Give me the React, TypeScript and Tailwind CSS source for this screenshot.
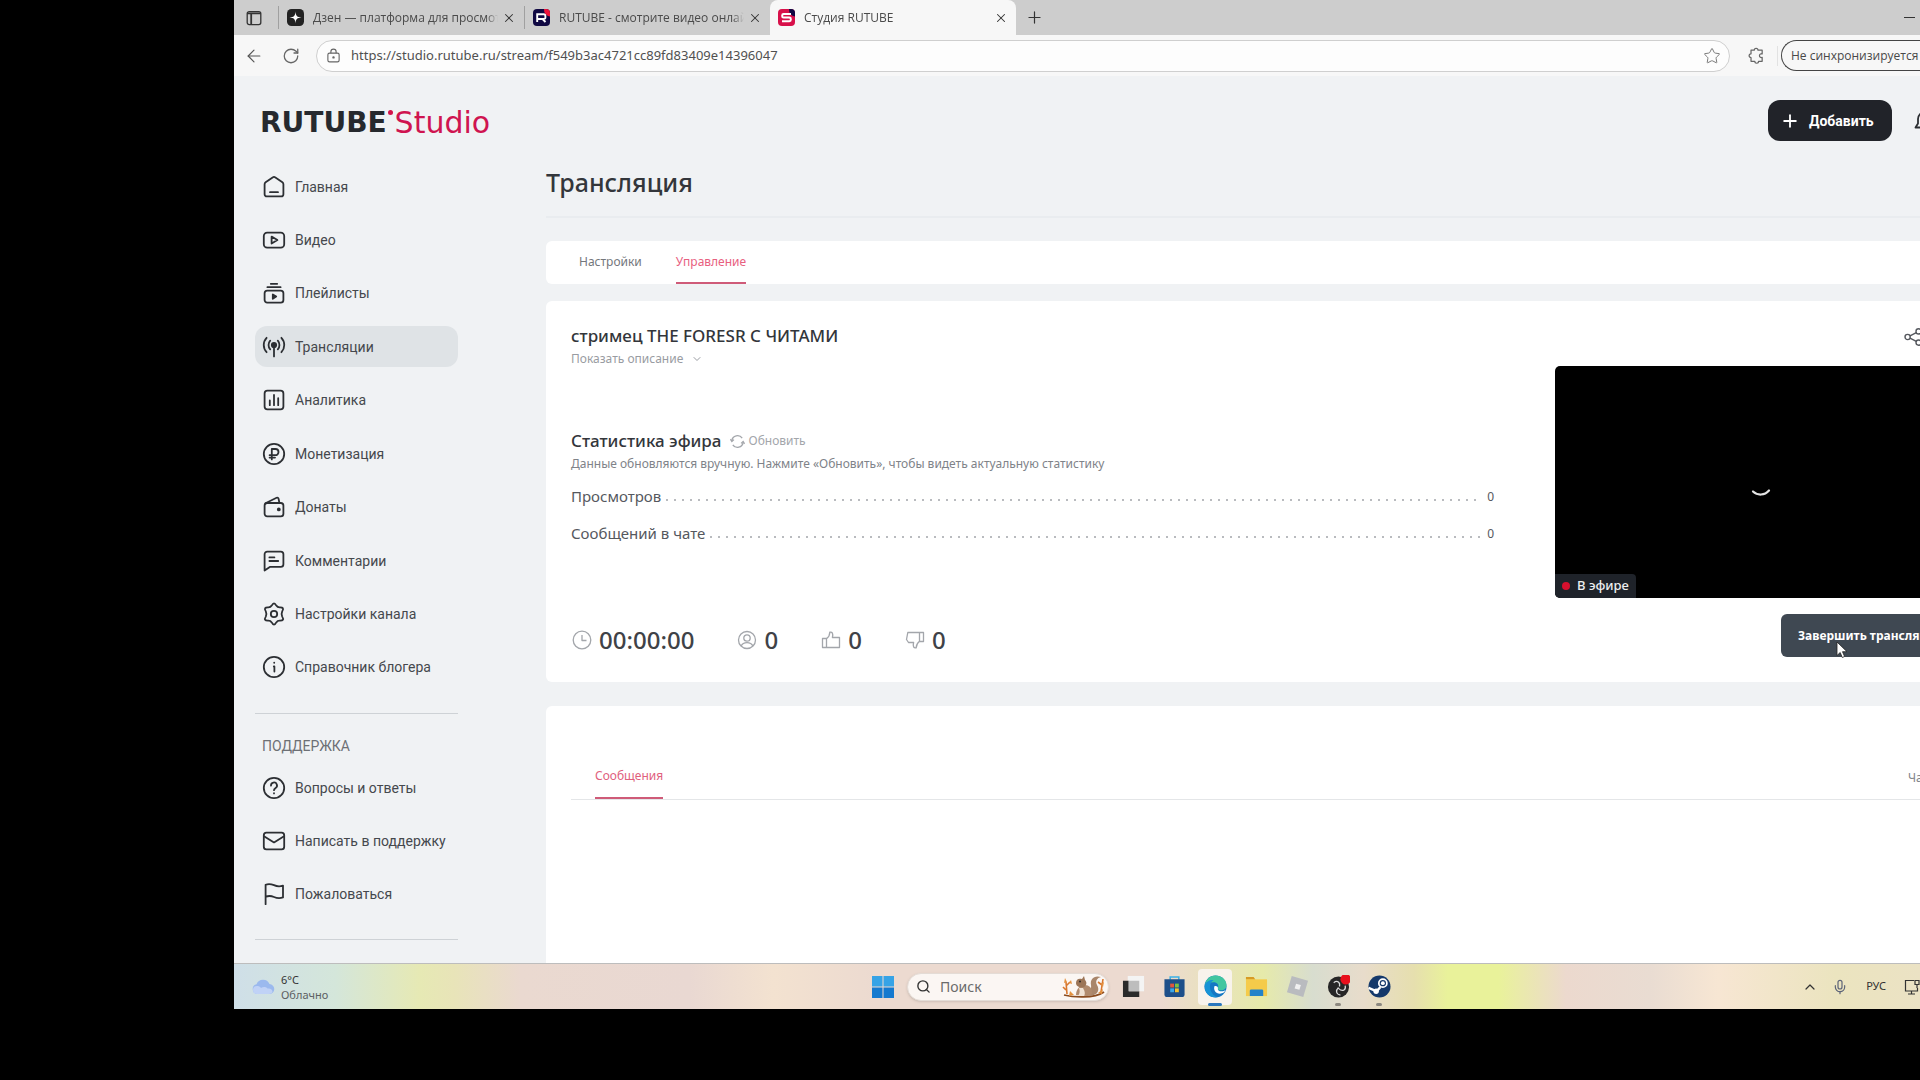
import type { ReactNode } from "react"
import { ArrowLeft, ChevronDown, ChevronUp, Mic, Plus, RotateCw, Search, Star, X } from "lucide-react"

type NavItem = {
  label: string
  icon: ReactNode
  active?: boolean
}

function Glyph({ children }: { children: ReactNode }) {
  return (
    <svg
      viewBox="0 0 24 24"
      className="size-6 shrink-0"
      fill="none"
      stroke="currentColor"
      strokeWidth="1.8"
      strokeLinecap="round"
      strokeLinejoin="round"
      aria-hidden="true"
    >
      {children}
    </svg>
  )
}

const mainNav: NavItem[] = [
  {
    label: "Главная",
    icon: (
      <Glyph>
        <path d="M2.6 9.2c0-.8.4-1.5 1-2l7-4.8c.9-.6 1.9-.6 2.8 0l7 4.8c.6.5 1 1.2 1 2v10a2.2 2.2 0 0 1-2.2 2.2H4.8a2.2 2.2 0 0 1-2.2-2.2zM8 17.2h8" />
      </Glyph>
    ),
  },
  {
    label: "Видео",
    icon: (
      <Glyph>
        <rect x="1.8" y="4.6" width="20.4" height="15" rx="3.4" />
        <path d="M9.6 8.6v7l5.8-3.5z" />
      </Glyph>
    ),
  },
  {
    label: "Плейлисты",
    icon: (
      <Glyph>
        <rect x="2.6" y="9.6" width="18.8" height="12" rx="2.6" />
        <path d="M5.4 6.2h13.2M8.8 2.8h6.4" />
        <path d="M10.8 13.4v4.4l3.4-2.2z" fill="currentColor" />
      </Glyph>
    ),
  },
  {
    label: "Трансляции",
    active: true,
    icon: (
      <Glyph>
        <circle cx="12" cy="10" r="2.2" fill="currentColor" />
        <path d="M12 10v11.4M8.2 14.4c-2.2-2.4-2.2-6.4 0-8.8M15.8 14.4c2.2-2.4 2.2-6.4 0-8.8M4.6 17.2c-3.8-4-3.8-10.4 0-14.4M19.4 17.2c3.8-4 3.8-10.4 0-14.4" />
      </Glyph>
    ),
  },
  {
    label: "Аналитика",
    icon: (
      <Glyph>
        <rect x="2.6" y="2.6" width="18.8" height="18.8" rx="2.8" />
        <path d="M7.8 12.4v4.8M12 7v10.2M16.2 10.2v7" />
      </Glyph>
    ),
  },
  {
    label: "Монетизация",
    icon: (
      <Glyph>
        <circle cx="12" cy="12" r="10.2" />
        <path d="M9.8 17.4V7h3.6a3 3 0 0 1 0 6.2H7.6M7.6 15.6h5.4" />
      </Glyph>
    ),
  },
  {
    label: "Донаты",
    icon: (
      <Glyph>
        <rect x="2.6" y="8" width="18.8" height="13.4" rx="2.6" />
        <path d="M3.4 8.2l11.2-5.4a1.4 1.4 0 0 1 2 1L17.4 8" />
        <circle cx="16.8" cy="14.4" r="1" fill="currentColor" />
      </Glyph>
    ),
  },
  {
    label: "Комментарии",
    icon: (
      <Glyph>
        <path d="M2.6 21.6V5.2a2.6 2.6 0 0 1 2.6-2.6h13.6a2.6 2.6 0 0 1 2.6 2.6v10a2.6 2.6 0 0 1-2.6 2.6H8.2zM7.4 8.4h5M7.4 12h8.8" />
      </Glyph>
    ),
  },
  {
    label: "Настройки канала",
    icon: (
      <Glyph>
        <path d="M9.7 3.6Q12-.8 14.3 3.6 15.5 5.5 17.8 5.4 22.8 5.2 20.2 9.4 19 12 20.2 14.6 22.8 18.8 17.8 18.6 15.5 18.5 14.3 20.4 12 24.8 9.7 20.4 8.5 18.5 6.2 18.6 1.2 18.8 3.8 14.6 5 12 3.8 9.4 1.2 5.2 6.2 5.4 8.5 5.5 9.7 3.6z" />
        <circle cx="12" cy="12" r="3.2" />
      </Glyph>
    ),
  },
  {
    label: "Справочник блогера",
    icon: (
      <Glyph>
        <circle cx="12" cy="12" r="10.2" />
        <path d="M11.8 11.4h.6v5.2M12.2 7.6v.2" />
      </Glyph>
    ),
  },
]

const supportNav: NavItem[] = [
  {
    label: "Вопросы и ответы",
    icon: (
      <Glyph>
        <circle cx="12" cy="12" r="10.2" />
        <path d="M9 9.6a3 3 0 1 1 4.6 2.4c-1 .7-1.6 1-1.6 2.2M12 17.2v.2" />
      </Glyph>
    ),
  },
  {
    label: "Написать в поддержку",
    icon: (
      <Glyph>
        <rect x="1.8" y="3.6" width="20.4" height="16.8" rx="2.6" />
        <path d="M2.4 7.4 12 13.4l9.6-6" />
      </Glyph>
    ),
  },
  {
    label: "Пожаловаться",
    icon: (
      <Glyph>
        <path d="M3.6 22.2V2.8c3-1.4 5.6-.8 8.4.4s5.6 1.6 9 .4v11.8c-3.4 1.2-6.2.8-9-.4s-5.4-1.4-8.4-.2" />
      </Glyph>
    ),
  },
]

function NavList({ items, className = "gap-3" }: { items: NavItem[]; className?: string }) {
  return (
    <ul className={`flex flex-col ${className}`}>
      {items.map((item) => (
        <li key={item.label}>
          <a
            href="#"
            className={`flex h-[41px] items-center gap-[9px] rounded-xl pl-[7px] font-[Roboto,sans-serif] text-sm whitespace-nowrap text-[#45484d] ${
              item.active ? "bg-[#dfe3e6]" : ""
            }`}
          >
            <span className="text-[#2c2f33]">{item.icon}</span>
            {item.label}
          </a>
        </li>
      ))}
    </ul>
  )
}

function BrowserTab({ title, icon, active }: { title: string; icon: ReactNode; active?: boolean }) {
  return (
    <div
      className={`flex h-[35px] w-[246px] items-center pr-2 pl-2 ${
        active ? "rounded-t-lg bg-[#f7f7f7]" : "border-l border-[#a9a9a9] [border-image:linear-gradient(to_bottom,transparent_20%,#a0a0a0_20%,#a0a0a0_80%,transparent_80%)_1]"
      }`}
    >
      {icon}
      <span className="ml-[9px] flex-1 overflow-hidden text-xs whitespace-nowrap text-[#4a4a4a] [mask-image:linear-gradient(to_right,black_94%,transparent)]">
        {title}
      </span>
      <button aria-label={`Закрыть ${title}`} className="ml-1 text-[#333]">
        <X className="size-[14px]" strokeWidth={1.8} />
      </button>
    </div>
  )
}

function BrowserChrome() {
  return (
    <header className="font-['Open_Sans',sans-serif]">
      <div className="flex h-[35px] items-center bg-[#cdcdcd]">
        <button aria-label="Меню вкладок" className="mr-4 ml-[12px] text-[#333]">
          <svg viewBox="0 0 16 16" className="size-4" fill="none" stroke="currentColor" strokeWidth="1.3">
            <rect x="1.2" y="1.6" width="13.6" height="13" rx="2" />
            <path d="M1.2 3.4h13.6M5.2 4v10.5" strokeWidth="1.8" />
          </svg>
        </button>
        <BrowserTab
          title="Дзен — платформа для просмот"
          icon={
            <svg viewBox="0 0 17 17" className="size-[17px] shrink-0">
              <rect width="17" height="17" rx="4.5" fill="#222" />
              <path d="M8.5 2.5c.3 4.5 1.5 5.7 6 6-4.5.3-5.7 1.5-6 6-.3-4.5-1.5-5.7-6-6 4.5-.3 5.7-1.5 6-6z" fill="#fff" />
            </svg>
          }
        />
        <BrowserTab
          title="RUTUBE - смотрите видео онлай"
          icon={
            <svg viewBox="0 0 17 17" className="size-[17px] shrink-0">
              <rect width="17" height="17" rx="4" fill="#100943" />
              <path d="M11 0h2a4 4 0 0 1 4 4v3.5A7 7 0 0 1 11 0z" fill="#ed143b" />
              <path d="M4.2 13V5.3h6.6a1.6 1.6 0 0 1 1.6 1.6v1.5A1.6 1.6 0 0 1 10.8 10H4.2M9.5 10l3 3" fill="none" stroke="#fff" strokeWidth="1.9" />
            </svg>
          }
        />
        <BrowserTab
          active
          title="Студия RUTUBE"
          icon={
            <svg viewBox="0 0 17 17" className="size-[17px] shrink-0">
              <rect width="17" height="17" rx="4" fill="#d8104a" />
              <path d="M11 0h2a4 4 0 0 1 4 4v3.5A7 7 0 0 1 11 0z" fill="#100943" />
              <path d="M13 5H5.6a1.4 1.4 0 0 0-1.4 1.4v.8a1.4 1.4 0 0 0 1.4 1.4h5.8a1.4 1.4 0 0 1 1.4 1.4v.8a1.4 1.4 0 0 1-1.4 1.4H4" fill="none" stroke="#fff" strokeWidth="2" />
            </svg>
          }
        />
        <button aria-label="Новая вкладка" className="ml-[9px] text-[#333]">
          <Plus className="size-[19px]" strokeWidth={1.5} />
        </button>
        <button aria-label="Свернуть" className="ml-auto flex w-4 items-center">
          <span className="h-px w-[11px] bg-[#333]" />
        </button>
      </div>

      <div className="flex h-[41px] items-center bg-[#f7f7f7]">
        <button aria-label="Назад" className="ml-[10px] text-[#555]">
          <ArrowLeft className="size-5" strokeWidth={1.4} />
        </button>
        <button aria-label="Обновить страницу" className="ml-[18px] text-[#666]">
          <RotateCw className="size-[18px]" strokeWidth={1.7} />
        </button>
        <div className="ml-4 flex h-8 flex-1 items-center rounded-full border border-[#cfcfcf] bg-[#fdfdfd] pr-2 pl-[9px]">
          <svg viewBox="0 0 16 16" className="size-[15px] shrink-0" fill="none" stroke="#666" strokeWidth="1.2">
            <rect x="2" y="5.5" width="12" height="9.3" rx="1.8" />
            <path d="M5.2 5.5V4a2.8 2.8 0 0 1 5.6 0v1.5" />
            <circle cx="8" cy="10" r=".7" fill="#666" />
          </svg>
          <input
            aria-label="Адресная строка"
            defaultValue="https://studio.rutube.ru/stream/f549b3ac4721cc89fd83409e14396047"
            className="ml-[10px] min-w-0 flex-1 bg-transparent font-['Noto_Sans',sans-serif] text-[13px] text-[#505050] outline-none"
          />
          <button aria-label="В избранное" className="text-[#777]">
            <Star className="size-[18px]" strokeWidth={1.3} />
          </button>
        </div>
        <button aria-label="Расширения" className="ml-[18px] text-[#666]">
          <svg viewBox="0 0 18 18" className="size-[17px]" fill="none" stroke="currentColor" strokeWidth="1.3" strokeLinejoin="round">
            <path d="M6.6 3.4a2 2 0 0 1 4 0H15v4a2 2 0 1 0 0 3.6v4.2h-3.8a2 2 0 0 1-4 0H3.2v-4a2 2 0 0 1 0-4V3.4z" />
          </svg>
        </button>
        <span className="mr-[3px] ml-3 h-5 w-px bg-[#e2e2e2]" />
        <button className="flex h-[31px] w-[139px] items-center rounded-l-full border border-r-0 border-[#444] pl-[9px] text-xs whitespace-nowrap text-[#484848]">
          Не синхронизируется
        </button>
      </div>
    </header>
  )
}

function Sidebar() {
  return (
    <aside className="w-[312px] shrink-0 pl-[21px]">
      <div className="w-[203px]">
        <div className="flex h-[90px] items-center pt-[3px] pl-[5px] font-['DejaVu_Sans',sans-serif] leading-none whitespace-nowrap">
          <span className="text-[28px] font-bold text-[#26292e]">RUTUBE</span>
          <span className="mb-5 ml-px size-[5px] shrink-0 rounded-full bg-[#d3124a]" />
          <span className="ml-[2px] text-[30px] text-[#cf1450]">Studio</span>
        </div>
        <nav>
          <NavList items={mainNav} className="h-[522px] justify-between" />
          <hr className="mt-[25px] border-[#ced2d6]" />
          <h2 className="mt-[22px] mb-[11px] pl-[7px] font-[Roboto,sans-serif] text-sm leading-5 text-[#6d7075]">ПОДДЕРЖКА</h2>
          <NavList items={supportNav} />
          <hr className="mt-[25px] border-[#ced2d6]" />
        </nav>
      </div>
    </aside>
  )
}

function StatRow({ label, value }: { label: string; value: number }) {
  return (
    <div className="flex h-[37px] items-center text-[15px] leading-5 text-[#55585e]">
      <dt>{label}</dt>
      <span className="mt-2 mr-1 ml-[2px] h-[2px] flex-1 bg-[radial-gradient(circle,#b9bbbf_1px,transparent_1px)] bg-[length:8px_2px]" />
      <dd className="pt-[3px] pl-[2px] text-xs">{value}</dd>
    </div>
  )
}

function Counter({ icon, value }: { icon: ReactNode; value: string }) {
  return (
    <div className="flex items-center gap-[7px]">
      <svg viewBox="0 0 20 20" className="size-5" fill="none" stroke="#a3a6ab" strokeWidth="1.3" strokeLinejoin="round">
        {icon}
      </svg>
      <span className="text-2xl leading-8 font-medium text-[#3f4247]">{value}</span>
    </div>
  )
}

function StreamCard() {
  return (
    <section className="mt-[17px] flex h-[381px] rounded-l-md bg-white pl-[25px]">
      <div className="flex min-w-0 flex-1 flex-col">
        <h2 className="mt-[23px] text-[17px] leading-6 font-medium text-[#33363b]">стримец THE FORESR С ЧИТАМИ</h2>
        <button className="mt-px flex items-center gap-2 self-start text-xs leading-5 text-[#999ca2]">
          Показать описание
          <ChevronDown className="size-3" strokeWidth={2} />
        </button>

        <div className="mt-[60px] flex items-center">
          <h2 className="text-[17px] leading-6 font-medium text-[#33363b]">Статистика эфира</h2>
          <button className="ml-2 flex items-center gap-1 text-xs leading-5 text-[#a3a6ab]">
            <svg viewBox="0 0 16 16" className="size-[15px]" fill="none" stroke="#a3a6ab" strokeWidth="1.4">
              <path d="M2 7a6 6 0 0 1 11-2.5M14 9a6 6 0 0 1-11 2.5" />
              <path d="M.5 5.5 2 8l2.2-2M15.5 10.5 14 8l-2.2 2" />
            </svg>
            Обновить
          </button>
        </div>
        <p className="mt-px text-xs leading-5 text-[#808389]">
          Данные обновляются вручную. Нажмите «Обновить», чтобы видеть актуальную статистику
        </p>
        <dl className="mt-[3px]">
          <StatRow label="Просмотров" value={0} />
          <StatRow label="Сообщений в чате" value={0} />
        </dl>

        <div className="mt-auto mb-[26px] flex gap-[43px] pl-px">
          <Counter
            value="00:00:00"
            icon={
              <>
                <circle cx="10" cy="10" r="8.8" />
                <path d="M10 5v5.5h4.5" />
              </>
            }
          />
          <Counter
            value="0"
            icon={
              <>
                <circle cx="10" cy="10" r="8.5" />
                <circle cx="10" cy="8" r="3.2" />
                <path d="M4.2 16c1-2.3 3-3.3 5.8-3.3s4.8 1 5.8 3.3" />
              </>
            }
          />
          <Counter
            value="0"
            icon={<path d="M1.5 8.5h4v9h-4zM5.5 8.8C7.8 7 8.8 5 8.8 2.2c2.4-.6 3.6 1.4 2.6 5.3h7.1v10h-13" />}
          />
          <Counter
            value="0"
            icon={<path d="M18.5 11.5h-4v-9h4zM14.5 11.2c-2.3 1.8-3.3 3.8-3.3 6.6-2.4.6-3.6-1.4-2.6-5.3H3.5l-2-3 1.3-7h11.7" />}
          />
        </div>
      </div>

      <div className="ml-[61px] w-[365px] shrink-0 overflow-hidden">
        <div className="mt-[26px] flex justify-end">
          <button aria-label="Поделиться" className="-mr-1">
            <svg viewBox="0 0 20 20" className="size-5" fill="none" stroke="#55585e" strokeWidth="1.4">
              <circle cx="3.6" cy="10" r="2.6" />
              <circle cx="14.6" cy="4.4" r="2.6" />
              <circle cx="14.6" cy="15.6" r="2.6" />
              <path d="m6 8.8 6.3-3.2M6 11.2l6.3 3.2" />
            </svg>
          </button>
        </div>
        <div className="relative mt-[19px] flex h-[232px] w-[412px] items-center justify-center rounded-[5px] bg-black">
          <svg viewBox="0 0 20 20" className="mt-[14px] size-5" fill="none" stroke="#e4e4e4" strokeWidth="2.2" strokeLinecap="round">
            <path d="M2 12.5c4.5 4.2 11.5 4.2 16-1" />
          </svg>
          <div className="absolute bottom-0 left-0 flex h-6 items-center gap-[7px] rounded-tr rounded-bl-[5px] bg-[#1f232a] px-[7px] text-[13px] font-medium whitespace-nowrap text-[#eceef0]">
            <span className="size-2 rounded-full bg-[#d6102e]" />
            В эфире
          </div>
        </div>
        <div className="relative mt-4 ml-[226px]">
          <button className="flex h-[43px] w-[180px] items-center rounded-md bg-[#3f4852] pl-[17px] text-xs font-bold whitespace-nowrap text-white">
            Завершить трансляцию
          </button>
          <svg viewBox="0 0 12 18" className="absolute top-[27px] left-[55px] h-[18px] w-3" aria-hidden="true">
            <path d="M1 1v13.5l3.2-3 2.1 5 2.3-1-2.1-4.8H11z" fill="#fff" stroke="#222" strokeWidth=".8" />
          </svg>
        </div>
      </div>
    </section>
  )
}

function Main() {
  return (
    <main className="flex min-w-0 flex-1 flex-col">
      <div className="flex justify-end pt-6">
        <button className="flex h-[41px] w-[124px] items-center gap-[9px] rounded-xl bg-[#212329] pl-3 font-[Roboto,sans-serif] text-sm font-bold text-white">
          <Plus className="size-5" strokeWidth={2.2} />
          Добавить
        </button>
        <button aria-label="Уведомления" className="ml-[22px] w-[6px] overflow-hidden">
          <svg viewBox="0 0 22 22" className="size-[22px]" fill="none" stroke="#2c2f33" strokeWidth="1.8" strokeLinejoin="round">
            <path d="M1.5 17.5 4 13.5V9a7 7 0 0 1 14 0v4.5l2.5 4z" />
          </svg>
        </button>
      </div>
      <h1 className="mt-[25px] text-[25px] leading-8 font-medium text-[#33363b]">Трансляция</h1>
      <hr className="mt-[18px] border-t-2 border-[#e9ecef]" />
      <div className="mt-[23px] flex h-[43px] gap-[34px] rounded-l-md bg-white pl-[33px] text-xs leading-[41px]" role="tablist">
        <button role="tab" aria-selected="false" className="border-b-2 border-transparent text-[#74777c]">
          Настройки
        </button>
        <button role="tab" aria-selected="true" className="border-b-2 border-[#cf5b78] text-[#e8607f]">
          Управление
        </button>
      </div>
      <StreamCard />
      <section className="mt-6 flex-1 rounded-tl-md bg-white pl-[25px]">
        <div className="flex items-end justify-between border-b border-[#e4e6e8] pt-[49px] pl-6 text-xs leading-[42px]">
          <button role="tab" aria-selected="true" className="border-b-2 border-[#cf5b78] text-[#e0607d]">
            Сообщения
          </button>
          <button className="w-3 overflow-hidden text-[#808389]">Чат</button>
        </div>
      </section>
    </main>
  )
}

function Squirrel() {
  return (
    <svg viewBox="0 0 44 26" className="h-[26px] w-11">
      <path d="M2 21c8 2 30 4 40-3" fill="none" stroke="#8a4b1f" strokeWidth="1.8" />
      <path d="M28 22c8-1 10-6 7-11-2-4 0-7 4-8-7-2-11 2-10 8 .6 4-1 7-4 8z" fill="#a9866b" />
      <path d="M14 21c0-6 4-10 9-10 4 0 7 3 7 7 0 3-2 4-5 4z" fill="#b08a6d" />
      <path d="M14 9c0-4 3-5 6-4l2-3 1 4c2 2 2 5-1 7-3 1-8 0-8-4z" fill="#9c7557" />
      <path d="M17 14c1 3 1 5-1 8h6c2-3 0-6-1-8z" fill="#f0e2d4" />
      <circle cx="18" cy="7.5" r=".9" fill="#222" />
      <path d="M5 20 4 8M4 12l4-4M4 16l-3-3M39 18l2-13M40 11l-4-3" stroke="#d8772e" strokeWidth="1.6" fill="none" />
      <path d="m3 4 2 4-3 1zM9 6l1 4-3-1zM42 8l-1 5-2-3zM36 19l5-4-1 5zM8 17l4 4-5 1z" fill="#e3913f" />
    </svg>
  )
}

const taskbarApps: { name: string; icon: ReactNode; active?: boolean; running?: boolean }[] = [
  {
    name: "Представление задач",
    icon: (
      <>
        <rect x="6" y="1" width="17" height="16" fill="#f4f4f4" />
        <path d="M1 6h6v11h11v6H1z" fill="#2b2b2b" />
        <path d="M7 6h11v11H7z" fill="#bdbdbd" />
      </>
    ),
  },
  {
    name: "Microsoft Store",
    icon: (
      <>
        <path d="M7.5 5V2h9v3" fill="none" stroke="#3bb0e6" strokeWidth="1.6" />
        <path d="M1.5 4.5h21V20a3 3 0 0 1-3 3h-15a3 3 0 0 1-3-3z" fill="#1d4f8a" />
        <path d="M7.5 9h4v4h-4z" fill="#e2553d" />
        <path d="M12.5 9h4v4h-4z" fill="#7cbf42" />
        <path d="M7.5 14h4v4h-4z" fill="#3ba7e8" />
        <path d="M12.5 14h4v4h-4z" fill="#f3c033" />
      </>
    ),
  },
  {
    name: "Microsoft Edge",
    active: true,
    icon: (
      <>
        <circle cx="12" cy="12" r="11.5" fill="#1577c4" />
        <path d="M1 10C2.5 3.5 7 .5 12 .5c6.5 0 11.5 4.5 11.5 10 0 3.5-2.5 5.5-5.5 5.5-2.5 0-4-1-3.5-2 1.5-4-1-6.5-4.5-6.5-4 0-7.5 1.5-9 2.5z" fill="#41c6a0" />
        <path d="M1 10c2-4 6-5.5 9-4.5-3 1.5-4.5 5-3.5 9 1 4 4 7.5 8 8.500C6 25-.5 18 1 10z" fill="#1793d6" />
        <path d="M14.5 14c-.5 1.5 1 3 4 3 1.5 0 3-.5 4-1-1 2-3 3.5-6 3.5-4.5 0-7-4-5.5-8 2-.5 4 .5 3.5 2.5z" fill="#fff" />
      </>
    ),
  },
  {
    name: "Проводник",
    icon: (
      <>
        <path d="M1 2h8l2 3H1z" fill="#d79b24" />
        <path d="M1 4.5h22V22H1z" fill="#f5cb4a" />
        <path d="M5 22v-5.5A1.5 1.5 0 0 1 6.5 15h11a1.5 1.5 0 0 1 1.5 1.5V22z" fill="#2283c9" />
      </>
    ),
  },
  {
    name: "Roblox",
    icon: (
      <>
        <path d="m6 1 17 5-5 17L1 18z" fill="#b9bbbf" />
        <path d="m10.5 9 5 1.5-1.5 5-5-1.5z" fill="#f1f1f1" />
      </>
    ),
  },
  {
    name: "OBS Studio",
    running: true,
    icon: (
      <>
        <circle cx="12" cy="12.5" r="11" fill="#262626" />
        <path d="M7 8c4-3 7 0 6 4M14 21c-5-1-5-5-2-8M19 11c1 5-3 7-7 3" fill="none" stroke="#d8d8d8" strokeWidth="1.3" />
        <circle cx="19.5" cy="4.5" r="5.5" fill="#e8101c" />
      </>
    ),
  },
  {
    name: "Steam",
    running: true,
    icon: (
      <>
        <circle cx="12" cy="12" r="11.5" fill="#15396b" />
        <circle cx="15.5" cy="8.5" r="4.2" fill="none" stroke="#fff" strokeWidth="1.8" />
        <circle cx="15.5" cy="8.5" r="2" fill="#fff" />
        <path d="M.6 13.5 9 17l4-4.5" fill="none" stroke="#fff" strokeWidth="2.6" />
        <circle cx="8.5" cy="17" r="2.8" fill="#fff" />
      </>
    ),
  },
]

function Taskbar() {
  return (
    <footer className="flex h-[46px] items-center border-t border-[#bdbdbd] bg-[linear-gradient(to_right,#cfdfe8,#d4e6da_6%,#e6e9b4_11%,#e8e4b8_13%,#ead9d0_17%,#e9d8d2_27%,#f3e2d0_32%,#ecdad0_38%,#ecdad0_55%,#e6eaaa_61%,#d8ddcf_64%,#e8dccb_67%,#e6dfae_70%,#e9f29a_72%,#e9f29a_75%,#ecd9ce_79%,#e9dcd2_84%,#f7e6d3_88%,#ebe4bf_95%,#ebe2c4)] text-[#333]">
      <button className="flex w-[560px] items-center gap-[6px] pl-[17px] text-left">
        <svg viewBox="0 0 24 18" className="h-[18px] w-6">
          <path d="M6 16a5 5 0 0 1-.5-9.8A7 7 0 0 1 18.5 6 5 5 0 0 1 18 16z" fill="#9bb9ee" />
          <path d="M6 16a4 4 0 0 1 0-8c1.5 0 3 .5 4 2 2-1.5 5-1.5 6.5.5 3-.5 5 1 5 3 0 1.5-1.5 2.5-3.5 2.5z" fill="#c0d2f6" />
        </svg>
        <span className="text-[11px] leading-[15px]">
          6°C
          <br />
          <span className="text-[#5c5f63]">Облачно</span>
        </span>
      </button>
      <button aria-label="Пуск" className="ml-[78px]">
        <svg viewBox="0 0 22 22" className="size-[22px]">
          <path d="M0 0h10.5v10.5H0zM11.5 0H22v10.5H11.5z" fill="#36a3e6" />
          <path d="M0 11.5h10.5V22H0zM11.5 11.5H22V22H11.5z" fill="#1479cf" />
        </svg>
      </button>
      <label className="ml-[13px] flex h-7 w-[202px] items-center rounded-full border border-[#e4dcd6] bg-[#fbf6f3] pr-[2px] pl-2 shadow-sm">
        <Search className="size-[15px] shrink-0" strokeWidth={2.2} />
        <input
          type="text"
          aria-label="Поиск"
          placeholder="Поиск"
          className="ml-[9px] min-w-0 flex-1 bg-transparent text-sm outline-none placeholder:text-[#6a6a6a]"
        />
        <Squirrel />
      </label>
      <div className="ml-[7px] flex gap-[7px]">
        {taskbarApps.map((app) => (
          <button
            key={app.name}
            aria-label={app.name}
            className={`relative flex h-9 w-[34px] items-center justify-center rounded ${app.active ? "bg-[#f8f3ec]" : ""}`}
          >
            <svg viewBox="0 0 24 24" className="size-[23px]">
              {app.icon}
            </svg>
            {app.active && <span className="absolute -bottom-px h-[3px] w-[14px] rounded-full bg-[#2a77bd]" />}
            {app.running && <span className="absolute -bottom-px h-[3px] w-[6px] rounded-full bg-[#8c8880]" />}
          </button>
        ))}
      </div>
      <div className="ml-auto flex items-center">
        <button aria-label="Скрытые значки">
          <ChevronUp className="size-4" strokeWidth={1.8} />
        </button>
        <button aria-label="Микрофон" className="ml-[14px] text-[#5d6478]">
          <Mic className="size-4" strokeWidth={1.8} />
        </button>
        <button className="ml-[18px] text-[11px]">РУС</button>
        <button aria-label="Сеть" className="ml-[18px]">
          <svg viewBox="0 0 16 16" className="size-4" fill="none" stroke="currentColor" strokeWidth="1.2">
            <path d="M10 1.5H1.5v10.5h12V9M4 15h7M7.5 12v3" />
            <path d="M11 1.5h4v4h-4zM13 5.5V9" />
          </svg>
        </button>
      </div>
    </footer>
  )
}

export default function App() {
  return (
    <div className="flex min-h-screen flex-col overflow-hidden bg-black pb-[71px] pl-[234px] font-['Noto_Sans',sans-serif]">
      <BrowserChrome />
      <div className="flex flex-1 bg-[#f0f2f4]">
        <Sidebar />
        <Main />
      </div>
      <Taskbar />
    </div>
  )
}
